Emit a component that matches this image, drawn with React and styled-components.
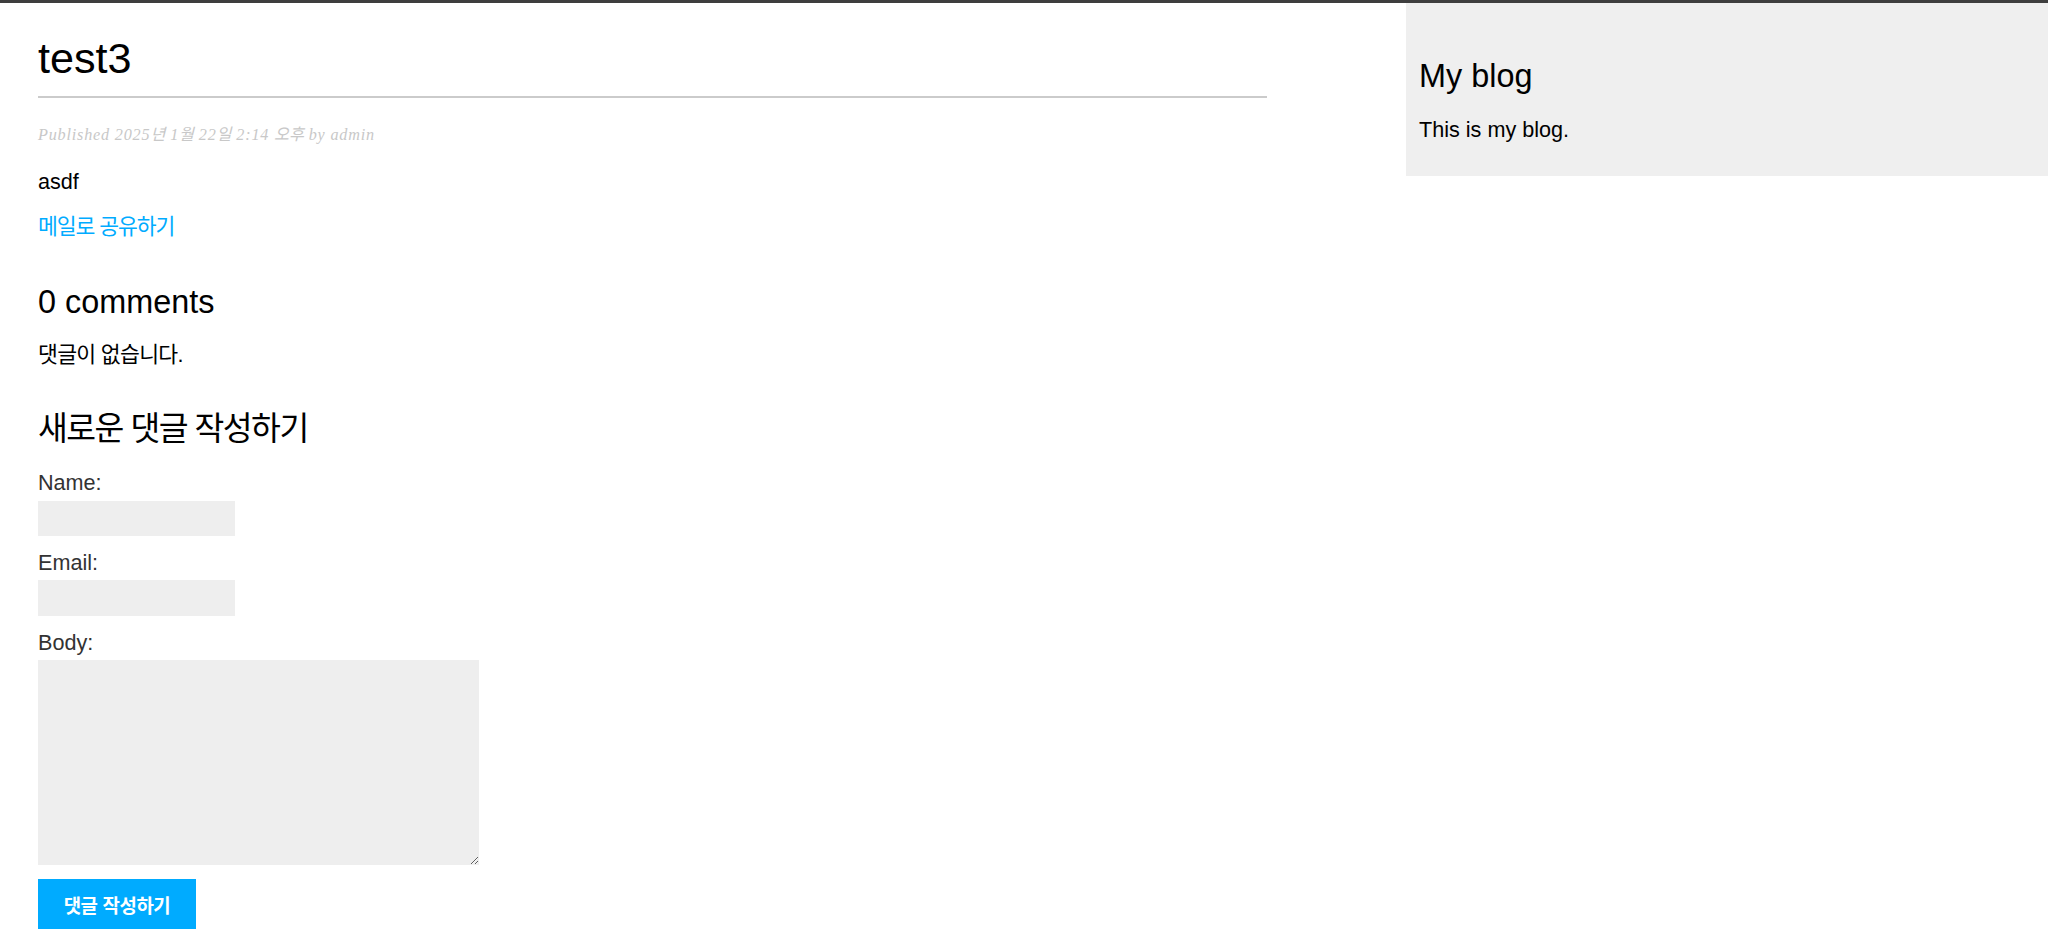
import React from "react";
import styled, { createGlobalStyle } from "styled-components";

const GlobalStyle = createGlobalStyle`
  body {
    margin: 0;
    padding: 0;
    background: #fff;
    font-family: "Liberation Sans", "Noto Sans CJK KR", sans-serif;
    color: #000;
  }
`;

const TopEdge = styled.div`
  height: 3px;
  background: #3e3e3e;
`;

const Layout = styled.div`
  display: flex;
  justify-content: space-between;
  align-items: flex-start;
`;

const Content = styled.main`
  width: 1229px;
  padding-left: 38px;
  display: flex;
  flex-direction: column;
  align-items: flex-start;
`;

const Title = styled.h1`
  align-self: stretch;
  margin: 30px 0 0;
  padding: 0 0 13px;
  font-size: 43.2px;
  line-height: 50px;
  font-weight: normal;
  border-bottom: 2px solid #cbcbcb;
`;

const PostDate = styled.p`
  margin: 27px 0 0;
  font-family: "Liberation Serif", "Noto Sans CJK KR", serif;
  font-style: italic;
  font-size: 16.2px;
  line-height: 20px;
  letter-spacing: 0.8px;
  color: #c8c8c8;
`;

// Korean runs are narrower in the reference font, so use proportional hangul
const Hangul = styled.span`
  font-feature-settings: "palt";
  letter-spacing: ${(p) => p.$tight || "0"};
`;

const Paragraph = styled.p`
  margin: ${(p) => p.$gap || 0}px 0 0;
  font-size: 21.6px;
  line-height: 26px;
`;

const ShareLink = styled.a`
  display: block;
  margin-top: 19px;
  font-size: 21.6px;
  line-height: 26px;
  color: #00abff;
  text-decoration: none;
`;

const Heading = styled.h2`
  margin: ${(p) => p.$gap}px 0 0;
  font-size: 32.4px;
  line-height: 38px;
  font-weight: normal;
`;

const CommentForm = styled.form`
  display: flex;
  flex-direction: column;
  align-items: flex-start;
`;

const Label = styled.label`
  margin-top: ${(p) => p.$gap}px;
  font-size: 21.6px;
  line-height: 26px;
  color: #333;
`;

const TextInput = styled.input`
  box-sizing: border-box;
  width: 197px;
  height: ${(p) => p.$h}px;
  margin-top: ${(p) => p.$gap}px;
  border: 0;
  padding: 10px;
  background: #eee;
  font-size: 18px;
  outline: none;
`;

const BodyInput = styled.textarea`
  box-sizing: border-box;
  width: 441px;
  height: 205px;
  margin-top: 4px;
  border: 0;
  padding: 10px;
  background: #eee;
  font-size: 18px;
  outline: none;
`;

const SubmitButton = styled.button`
  width: 158px;
  height: 50px;
  margin-top: 14px;
  border: 0;
  padding: 0;
  background: #00abff;
  color: #fff;
  font-family: "Liberation Sans", "Noto Sans CJK KR", sans-serif;
  font-weight: bold;
  font-size: 18.9px;
  cursor: pointer;
`;

const Sidebar = styled.aside`
  box-sizing: border-box;
  width: 642px;
  height: 173px;
  padding: 54px 13px 0;
  background: #efefef;
`;

const SidebarTitle = styled.h2`
  margin: 0;
  font-size: 32.4px;
  line-height: 38px;
  font-weight: normal;
`;

const SidebarText = styled.p`
  margin: 22px 0 0;
  font-size: 21.6px;
  line-height: 26px;
`;

export default function App() {
  return (
    <>
      <GlobalStyle />
      <TopEdge />
      <Layout>
        <Content>
          <Title>test3</Title>
          <PostDate>
            Published 2025<Hangul>년</Hangul> 1<Hangul>월</Hangul> 22
            <Hangul>일</Hangul> 2:14 <Hangul>오후</Hangul> by admin
          </PostDate>
          <Paragraph $gap={24}>asdf</Paragraph>
          <ShareLink href="#">
            <Hangul $tight="-1.1px">메일로 공유하기</Hangul>
          </ShareLink>

          <Heading $gap={43}>0 comments</Heading>
          <Paragraph $gap={21}>
            <Hangul $tight="-0.7px">댓글이 없습니다.</Hangul>
          </Paragraph>

          <Heading $gap={42}>
            <Hangul $tight="-1.5px">새로운 댓글 작성하기</Hangul>
          </Heading>
          <CommentForm onSubmit={(e) => e.preventDefault()}>
            <Label $gap={22} htmlFor="name">Name:</Label>
            <TextInput id="name" type="text" $gap={5} $h={35} />
            <Label $gap={14} htmlFor="email">Email:</Label>
            <TextInput id="email" type="text" $gap={4} $h={36} />
            <Label $gap={14} htmlFor="body">Body:</Label>
            <BodyInput id="body" />
            <SubmitButton type="submit">
              <Hangul $tight="-0.4px">댓글 작성하기</Hangul>
            </SubmitButton>
          </CommentForm>
        </Content>

        <Sidebar>
          <SidebarTitle>My blog</SidebarTitle>
          <SidebarText>This is my blog.</SidebarText>
        </Sidebar>
      </Layout>
    </>
  );
}
